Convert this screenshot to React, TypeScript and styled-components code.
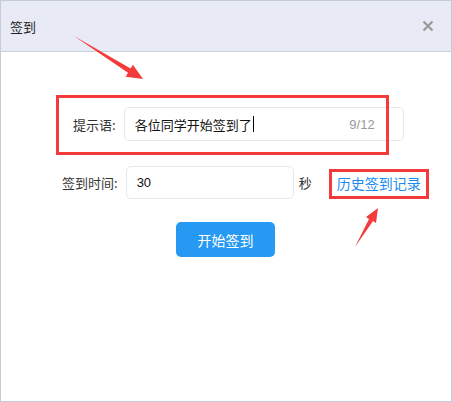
import React from "react";
import styled, { createGlobalStyle } from "styled-components";

const Global = createGlobalStyle`
  html, body { margin: 0; padding: 0; background: #fff; }
  body { font-family: "Noto Sans CJK SC", "Liberation Sans", sans-serif; }
  * { box-sizing: border-box; }
`;

const Dialog = styled.div`
  position: relative;
  width: 452px;
  height: 402px;
  border: 1px solid #c6ccd7;
  background: #fff;
  display: flex;
  flex-direction: column;
`;

const Header = styled.div`
  height: 51px;
  flex: none;
  background: #e8ebf5;
  border-bottom: 1px solid #ccd1db;
  display: flex;
  align-items: center;
  justify-content: space-between;
  padding: 0 17px 0 9px;
`;

const Title = styled.span`
  font-size: 13px;
  color: #222;
`;

const Close = styled.span`
  width: 12px;
  height: 12px;
  display: flex;
`;

const Body = styled.div`
  display: flex;
  flex-direction: column;
  padding-top: 55px;
`;

const Row = styled.div<{ $indent: number; $mt?: number }>`
  display: flex;
  align-items: center;
  padding-left: ${(p) => p.$indent}px;
  margin-top: ${(p) => p.$mt ?? 0}px;
`;

const Label = styled.span`
  font-size: 13px;
  color: #333;
  margin-right: 8px;
`;

const Field = styled.div<{ $w: number; $h: number }>`
  width: ${(p) => p.$w}px;
  height: ${(p) => p.$h}px;
  border: 1px solid #e6e8ec;
  border-radius: 5px;
  display: flex;
  align-items: center;
  padding: 0 28px 0 10px;
  font-size: 13px;
  color: #111;
`;

const Value = styled.span`
  flex: 1;
  display: flex;
  align-items: center;
`;

const Caret = styled.span`
  display: inline-block;
  width: 1px;
  height: 16px;
  background: #000;
  margin-left: 1px;
`;

const Counter = styled.span<{ $dark?: boolean }>`
  font-family: "Liberation Sans", sans-serif;
  font-size: 13px;
  color: ${(p) => (p.$dark ? "#111" : "#999")};
`;

const Unit = styled.span`
  font-size: 13px;
  color: #333;
  margin-left: 5px;
`;

const Link = styled.a`
  font-size: 14px;
  color: #1a8cf0;
  text-decoration: none;
  margin-left: 25px;
  cursor: pointer;
`;

const Actions = styled.div`
  display: flex;
  padding-left: 175px;
  margin-top: 23px;
`;

const Button = styled.button`
  width: 99px;
  height: 35px;
  border: none;
  border-radius: 5px;
  background: #2699f2;
  color: #fff;
  font-family: "Noto Sans CJK SC", sans-serif;
  font-size: 14px;
  padding: 0;
`;

const Mark = styled.div<{ $x: number; $y: number; $w: number; $h: number }>`
  position: absolute;
  left: ${(p) => p.$x}px;
  top: ${(p) => p.$y}px;
  width: ${(p) => p.$w}px;
  height: ${(p) => p.$h}px;
  border: 3px solid #f43a3a;
  pointer-events: none;
`;

const Overlay = styled.svg`
  position: absolute;
  left: -1px;
  top: -1px;
  pointer-events: none;
`;

export default function App() {
  return (
    <>
      <Global />
      <Dialog>
        <Header>
          <Title>签到</Title>
          <Close>
            <svg width="12" height="12" viewBox="0 0 12 12">
              <path d="M1.5 1.5 L10.5 10.5 M10.5 1.5 L1.5 10.5" stroke="#999" strokeWidth="2.2" />
            </svg>
          </Close>
        </Header>
        <Body>
          <Row $indent={72}>
            <Label>提示语:</Label>
            <Field $w={280} $h={34}>
              <Value>
                各位同学开始签到了
                <Caret />
              </Value>
              <Counter>9/12</Counter>
            </Field>
          </Row>
          <Row $indent={61} $mt={25}>
            <Label>签到时间:</Label>
            <Field $w={168} $h={33}>
              <Value>
                <Counter $dark>30</Counter>
              </Value>
            </Field>
            <Unit>秒</Unit>
            <Link>历史签到记录</Link>
          </Row>
          <Actions>
            <Button>开始签到</Button>
          </Actions>
        </Body>
        <Mark $x={55} $y={94} $w={333} $h={60} />
        <Mark $x={328} $y={168} $w={100} $h={30} />
        <Overlay width="452" height="402" viewBox="0 0 452 402">
          <polygon
            points="74,36 130.6,68.6 132.9,64.7 143,79 125.7,76.7 128,72.8"
            fill="#f43a3a"
          />
          <polygon
            points="355,247 373,221 376,223 378,208 366,217 369,219"
            fill="#f43a3a"
          />
        </Overlay>
      </Dialog>
    </>
  );
}
